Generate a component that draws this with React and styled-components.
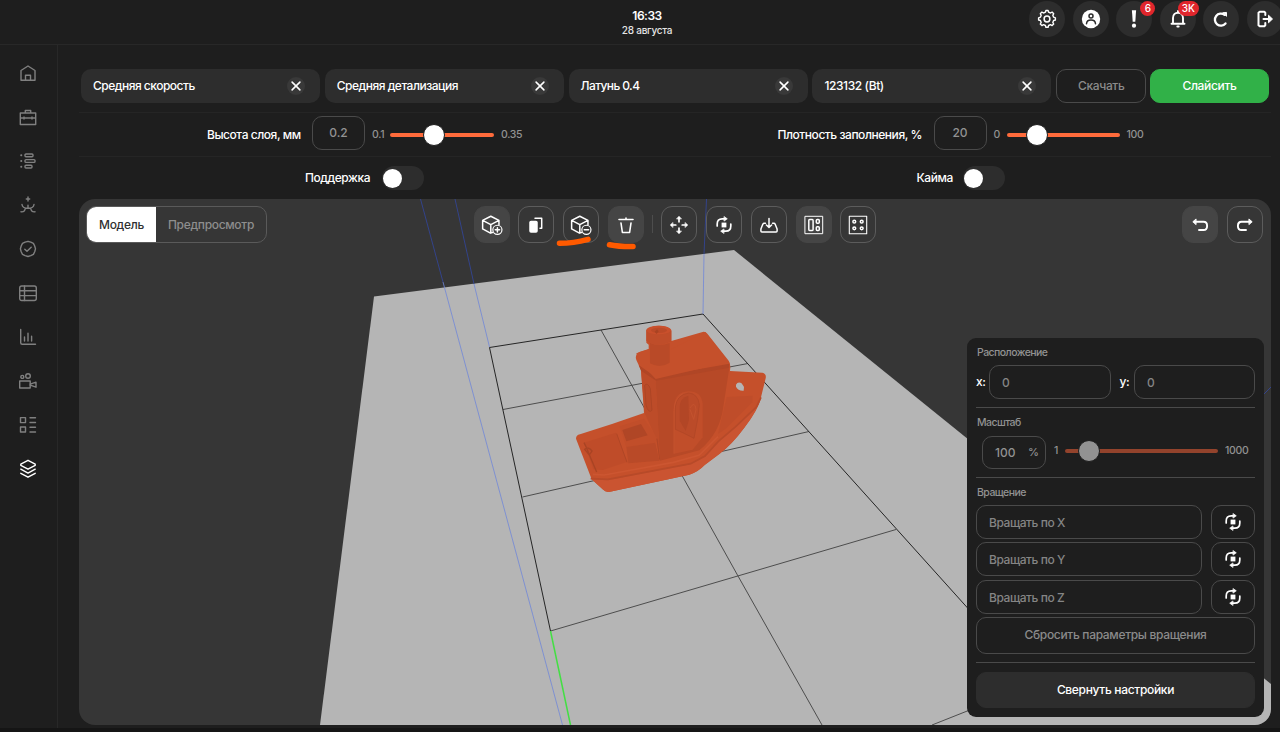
import React from "react";
import styled, { createGlobalStyle } from "styled-components";

const GlobalStyle = createGlobalStyle`
  *, *::before, *::after { box-sizing: border-box; }
  body { margin: 0; background: #1e1e1e; overflow: hidden; }
  button { font: inherit; color: inherit; letter-spacing: inherit; padding: 0; cursor: pointer; }
`;

const Page = styled.div`
  height: 732px;
  display: flex;
  flex-direction: column;
  background: #1e1e1e;
  color: #fff;
  font-family: Inter, "Liberation Sans", sans-serif;
  font-size: 12px;
  font-weight: 500;
  line-height: 16px;
  letter-spacing: -0.45px;
  overflow: hidden;
`;

const Header = styled.header`
  height: 45px;
  flex: none;
  display: grid;
  grid-template-columns: 1fr 200px 1fr;
  border-bottom: 1px solid #282828;
`;

const Clock = styled.div`
  grid-column: 2;
  padding: 8px 0 0 14px;
  text-align: center;
`;

const Time = styled.div`
  font-size: 12px;
  font-weight: 600;
  line-height: 15px;
  letter-spacing: -0.5px;
`;

const DateText = styled.div`
  font-size: 10px;
  line-height: 14px;
  color: #e4e4e4;
  letter-spacing: -0.25px;
`;

const HeaderActions = styled.div`
  display: flex;
  justify-content: flex-end;
  gap: 7.6px;
  margin: 1px -3px 0 0;
`;

const RoundButton = styled.button`
  position: relative;
  width: 36px;
  height: 36px;
  flex: none;
  display: grid;
  place-items: center;
  border: 0;
  border-radius: 50%;
  background: #2d2d2d;
`;

const Badge = styled.span`
  position: absolute;
  top: 0;
  left: ${(p) => p.$left}px;
  height: 15px;
  min-width: 15px;
  padding: 0 4px;
  border-radius: 8px;
  background: #e0262c;
  font-size: 10px;
  line-height: 15px;
  text-align: center;
  letter-spacing: -0.2px;
`;

const Body = styled.div`
  flex: 1;
  display: flex;
  min-height: 0;
`;

const Sidebar = styled.nav`
  width: 58px;
  flex: none;
  padding: 6px 2px 0 0;
  border-right: 1px solid #282828;
  display: flex;
  flex-direction: column;
`;

const NavItem = styled.a`
  height: 44px;
  display: grid;
  place-items: center;
  color: ${(p) => (p.$active ? "#fff" : "#808080")};
`;

const Main = styled.main`
  width: 1192px;
  margin-left: 21px;
  flex: none;
`;

const Selectors = styled.div`
  height: 68px;
  display: flex;
  gap: 4.8px;
  padding: 24px 2px 0;
  border-bottom: 1px solid #252525;
`;

const Selector = styled.div`
  width: 239px;
  height: 34px;
  display: flex;
  align-items: center;
  justify-content: space-between;
  padding: 0 15px 0 12px;
  border-radius: 10px;
  background: #2d2d2d;
  letter-spacing: ${(p) => p.$track}px;
`;

const ClearButton = styled.button`
  width: 18px;
  height: 18px;
  display: grid;
  place-items: center;
  border: 0;
  border-radius: 50%;
  background: #393939;
`;

const ActionButton = styled.button`
  width: ${(p) => (p.$primary ? 119 : 90)}px;
  height: 34px;
  border-radius: 10px;
  border: 1px solid ${(p) => (p.$primary ? "#31b148" : "#4a4a4a")};
  background: ${(p) => (p.$primary ? "#31b148" : "transparent")};
  color: ${(p) => (p.$primary ? "#fff" : "#8b8b8b")};
  margin-left: ${(p) => (p.$primary ? -1 : 0)}px;
  letter-spacing: -0.35px;
`;

const Settings = styled.div`
  height: ${(p) => p.$h}px;
  display: flex;
  border-bottom: ${(p) => (p.$line ? "1px solid #252525" : "0")};
`;

const Half = styled.div`
  width: 596px;
  display: flex;
  align-items: center;
  justify-content: center;
  padding-right: 25px;
`;

const Label = styled.span`
  width: ${(p) => p.$w}px;
  margin-right: 11px;
  white-space: nowrap;
`;

const NumberBox = styled.div`
  width: ${(p) => p.$w || 53}px;
  height: ${(p) => (p.$pad ? 33 : 34)}px;
  flex: none;
  display: flex;
  align-items: center;
  justify-content: ${(p) => (p.$pad ? "space-between" : "center")};
  padding: ${(p) => (p.$pad ? "0 6px 0 12px" : "0")};
  margin: ${(p) => (p.$pad ? "0 0 -3px" : "-3px 0 0")};
  border: 1px solid #4a4a4a;
  border-radius: 10px;
  color: #929292;
  letter-spacing: 0;
`;

const Unit = styled.span`
  font-size: 11px;
  margin-top: -2px;
`;

const Bound = styled.span`
  width: ${(p) => p.$w}px;
  margin-left: ${(p) => p.$ml || 0}px;
  flex: none;
  font-size: 10.5px;
  color: #929292;
  white-space: nowrap;
  letter-spacing: -0.3px;
`;

const Track = styled.div`
  width: ${(p) => p.$w}px;
  height: 4px;
  flex: none;
  margin: 0 7px;
  border-radius: 2px;
  background: ${(p) => (p.$muted ? "#93432c" : "#ff6b3b")};
  display: flex;
  align-items: center;
`;

const Thumb = styled.i`
  width: 22px;
  height: 22px;
  flex: none;
  border: 1px solid #1e1e1e;
  border-radius: 50%;
  background: ${(p) => (p.$muted ? "#929292" : "#fff")};
`;

const Toggle = styled.div`
  width: 42px;
  height: 24px;
  padding: 3px 1px;
  border-radius: 12px;
  background: #2d2d2d;
  &::before {
    content: "";
    display: block;
    width: 19px;
    height: 19px;
    border-radius: 50%;
    background: #fff;
  }
`;

const Viewport = styled.section`
  position: relative;
  height: 526px;
  border-radius: 16px;
  background: #363636;
  overflow: hidden;
`;

const Scene = styled.svg`
  display: block;
  width: 1192px;
  height: 526px;
`;

const TopTools = styled.div`
  position: absolute;
  inset: 7px 8px auto 7px;
  display: flex;
`;

const Tabs = styled.div`
  width: 181px;
  height: 37px;
  display: flex;
  border: 1px solid #5a5a5a;
  border-radius: 10px;
  overflow: hidden;
`;

const Tab = styled.button`
  width: ${(p) => (p.$active ? 69 : 110)}px;
  border: 0;
  background: ${(p) => (p.$active ? "#fff" : "transparent")};
  color: ${(p) => (p.$active ? "#303030" : "#8e8e8e")};
  letter-spacing: -0.32px;
`;

const ToolGroup = styled.div`
  display: flex;
  gap: 8.75px;
  margin-left: ${(p) => p.$ml};
`;

const ToolButton = styled.button`
  width: 36px;
  height: 37px;
  display: grid;
  place-items: center;
  border: 1px solid ${(p) => (p.$filled ? "#454545" : "#5c5c5c")};
  border-radius: 11px;
  background: ${(p) => (p.$filled ? "#454545" : "transparent")};
`;

const ToolDivider = styled.i`
  width: 1px;
  height: 18px;
  margin: 9px 0 0 -1px;
  background: #4d4d4d;
`;

const Marks = styled.svg`
  position: absolute;
  left: 474px;
  top: 36px;
  pointer-events: none;
`;

const Panel = styled.aside`
  position: absolute;
  right: 7px;
  bottom: 8px;
  width: 297px;
  height: 379px;
  padding: 6px 9px 9px;
  border-radius: 9px;
  background: #1e1e1e;
`;

const PanelSection = styled.div`
  height: ${(p) => p.$h}px;
  padding-top: ${(p) => p.$pt || 0}px;
  border-bottom: 1px solid #4a4a4a;
`;

const Caption = styled.div`
  height: 17px;
  padding-left: 1px;
  font-size: 10.5px;
  line-height: 17px;
  color: #929292;
  letter-spacing: -0.55px;
`;

const PanelRow = styled.div`
  display: flex;
  align-items: center;
  justify-content: ${(p) => (p.$spread ? "space-between" : "flex-start")};
  margin-top: ${(p) => p.$mt || 0}px;
  padding-left: ${(p) => p.$pl || 0}px;
`;

const Axis = styled.span`
  width: ${(p) => p.$w}px;
  margin-left: ${(p) => p.$ml || 0}px;
`;

const Field = styled.div`
  width: ${(p) => p.$w}px;
  height: 34px;
  line-height: 33px;
  padding-left: 12px;
  border: 1px solid #4a4a4a;
  border-radius: 10px;
  color: #858585;
`;

const RotateButton = styled.button`
  width: 44px;
  height: 34px;
  display: grid;
  place-items: center;
  border: 1px solid #4a4a4a;
  border-radius: 10px;
  background: transparent;
`;

const WideButton = styled.button`
  width: 279px;
  height: ${(p) => (p.$filled ? 36 : 37)}px;
  display: block;
  margin-top: ${(p) => (p.$filled ? 9 : 3)}px;
  border: 1px solid ${(p) => (p.$filled ? "#2d2d2d" : "#4a4a4a")};
  border-radius: 10px;
  background: ${(p) => (p.$filled ? "#2d2d2d" : "transparent")};
  color: ${(p) => (p.$filled ? "#fff" : "#8b8b8b")};
  letter-spacing: -0.32px;
`;

const BottomEdge = styled.div`
  height: 4px;
  flex: none;
  background: #151515;
`;

const Svg = ({ size = 20, sw = 1.5, children }) => (
  <svg width={size} height={size} viewBox="0 0 20 20" fill="none" stroke="currentColor"
    strokeWidth={sw} strokeLinecap="round" strokeLinejoin="round">{children}</svg>
);

const navIcons = [
  <path d="M3 17.2V7.500L10 3l7 4.500v9.700H3Zm4.500 0v-5h5v5" />,
  <><path d="M2.300 6h15.400v11.500H2.300ZM7.300 6V3.500h5.400V6M2.300 11h15.400" /><path d="M6 10v2M14 10v2" /></>,
  <><path d="M3.200 4.300h.1M3.200 10h.1M3.200 15.700h.1" strokeWidth="2" /><rect x="7" y="3" width="8" height="2.800" rx="1" /><rect x="7" y="8.600" width="10" height="2.800" rx="1" /><rect x="7" y="14.200" width="7" height="2.800" rx="1" /></>,
  <path d="M10 2v4M8.300 4h3.400M4 9.500c.3 2.500 2 3.800 6 3.800s5.700-1.300 6-3.800M3 16.800c3 .3 4.200-1 4.200-3.700M17 16.800c-3 .3-4.200-1-4.200-3.700M10 10.300v3" />,
  <><path d="m10 2.300 2.800.8 2.600 1.300 1.300 2.600.8 2.900-.8 2.900-1.300 2.600-2.600 1.300-2.800.8-2.900-.8-2.600-1.300-1.300-2.600-.8-2.900.8-2.900 1.300-2.600 2.600-1.300Z" /><path d="m6.800 10.200 2.200 2 4.200-4" /></>,
  <><rect x="1.700" y="3" width="16.600" height="14.500" rx="2" /><path d="M6.500 3v14.500M1.700 7.800h16.600M1.700 12.600h16.600" /></>,
  <path d="M2.700 2.500v13.200c0 1 .5 1.500 1.500 1.500h13.300M6.500 10v4M10 6.200V14M13.600 9.200V14" />,
  <><rect x="1.700" y="10" width="10.500" height="7" /><path d="m12.200 13.200 5.800-2v5l-5.800-2" /><circle cx="4.300" cy="5.900" r="1.500" /><circle cx="10" cy="5" r="2.300" /></>,
  <path d="M2.500 2.600h5v5h-5ZM2.500 12h5v5h-5ZM12 2.800h5.500M12 7.500h5.500M12 12.300h5.500M12 17h5.500" />,
  <path d="m10 1.300 7.200 3.800v1.300L10 10.200 2.800 6.400V5.100ZM2.800 10.200 10 14.100l7.200-3.900M2.800 14.300 10 18.200l7.200-3.900" />,
];

const Close = () => <Svg size={12} sw={2.600}><path d="m3.500 3.500 13 13M16.500 3.500l-13 13" /></Svg>;

const Cube = ({ minus }) => (
  <Svg size={24} sw={1.250}>
    <path d="M10.300 16.200 8.700 16.800 2.200 13.300V6.200L9 2.700l6.800 3.500v3.600M2.200 6.200 9 9.700l6.800-3.500M9 9.700v6.800" />
    <circle cx="14.500" cy="14" r="3.800" strokeWidth="1" />
    <path d={minus ? "M12.700 14h3.600" : "M12.700 14h3.600M14.500 12.200v3.600"} />
  </Svg>
);

const Rotate = () => (
  <Svg size={20} sw={1.700}>
    <rect x="7.600" y="7.600" width="4.800" height="4.800" fill="currentColor" stroke="none" />
    <path d="M3.200 11V9c0-3.600 1.600-5.200 5-5.200h2.500M16.800 9v2c0 3.600-1.600 5.200-5 5.200H9.300" />
    <path d="m10.300 1.700 3 2.100-3 2.100ZM9.700 14.100l-3 2.100 3 2.100Z" fill="currentColor" strokeWidth=".7" />
  </Svg>
);

const tools = [
  { filled: true, icon: <Cube /> },
  { icon: <Svg><rect x="4" y="6.500" width="7" height="10.500" rx="1" fill="currentColor" /><path d="M9 3.300h6.700v9.900h-1.700" /></Svg> },
  { icon: <Cube minus /> },
  { filled: true, icon: <Svg sw={1.600}><path d="M3 4.500h14M10 3v1M5 8l1.400 9.500h7.200L15 8" /></Svg> },
  { divider: true },
  { icon: <Svg sw={1.700}><path d="M10 6.800V3M10 13.200V17M6.800 10H3M13.200 10H17" /><path d="m7.700 3.700 2.300-2.500 2.300 2.500ZM7.700 16.300l2.300 2.500 2.300-2.500ZM3.700 7.700 1.200 10l2.500 2.300ZM16.300 7.700l2.500 2.300-2.500 2.300Z" fill="currentColor" strokeWidth=".6" /></Svg> },
  { icon: <Rotate /> },
  { icon: <Svg sw={1.500}><path d="M6.500 8.300H5.200q-1 0-1.400 1L1.900 14v2q0 1 1 1h14.200q1 0 1-1v-2l-1.900-4.700q-.4-1-1.400-1h-1.300M10 3.500v8.700M7.400 10l2.600 2.400 2.600-2.400" /></Svg> },
  { filled: true, icon: <Svg sw={1.500}><rect x="1.300" y="1.300" width="17.400" height="17.400" strokeWidth="1" /><rect x="4.800" y="4.600" width="4.300" height="10.800" rx=".8" /><rect x="12.300" y="4.600" width="3" height="3.600" rx="1" /><rect x="12.300" y="11.800" width="3" height="3.600" rx="1" /></Svg> },
  { icon: <Svg sw={1.500}><rect x="1.300" y="1.300" width="17.400" height="17.400" strokeWidth="1.100" /><circle cx="6.300" cy="6.700" r="1.400" /><circle cx="13.700" cy="6.700" r="1.400" /><circle cx="6.300" cy="13.300" r="1.400" /><circle cx="13.700" cy="13.300" r="1.400" /></Svg> },
];

const headerItems = [
  { icon: <Svg><circle cx="10" cy="10" r="2.900" /><path d="m8.400 3.200.5-1.700h2.200l.5 1.700 1.900.8 1.600-.9 1.600 1.600-.9 1.600.8 1.900 1.800.6v2.200l-1.800.5-.8 1.900.9 1.600-1.600 1.600-1.600-.9-1.900.8-.5 1.800H8.900l-.5-1.800-1.900-.8-1.600.9L3.300 15l.9-1.600-.8-1.900-1.800-.5V8.800l1.800-.6.8-1.900-.9-1.600 1.600-1.600 1.600.9Z" strokeWidth="1.400" /></Svg> },
  { icon: <Svg><circle cx="10" cy="10" r="9.200" fill="#fff" stroke="none" /><circle cx="10" cy="6.900" r="2" stroke="#2d2d2d" /><path d="M5.500 14.700c.3-5 8.700-5 9 0" stroke="#2d2d2d" /></Svg> },
  { icon: <Svg><path d="M7.900 1.200h4.200l-.8 11.500H8.700Z" fill="#fff" stroke="none" /><circle cx="10" cy="16.700" r="2.100" fill="#fff" stroke="none" /></Svg>, badge: "6", left: 24 },
  { icon: <Svg sw={1.900}><path d="M3.500 14.800h13M5 14.500V9c0-7 10-7 10 0v5.500M10 2v1.500M9.300 17.500h1.400" /></Svg>, badge: "3K", left: 18 },
  { icon: <Svg sw={2.300}><path d="M14.500 14.500A6 6 0 1 1 13.500 5.800" /><path d="m12.200 3.700 3.300-.3v3.500Z" fill="currentColor" strokeWidth="1" /></Svg> },
  { icon: <Svg sw={2}><path d="M10.300 6V3.700L9.300 2.800H4.700l-1.200 1v12.400l1.200 1h4.600l1-1V14M8.500 10h7" /><path d="m13.800 6.500 3.700 3.500-3.700 3.500Z" fill="currentColor" strokeWidth="1" /></Svg> },
];

function Slider({ w, at, muted }) {
  return (
    <Track $w={w} $muted={muted}>
      <Thumb $muted={muted} style={{ marginLeft: at - 11 }} />
    </Track>
  );
}

function Boat() {
  return (
    <g transform="translate(560 310) scale(.33333)">
      <path fill="#c5502b" d="M48 386Q48 375 60 373L156 342L252 309L243 180L229 150Q223 133 240 125L266 117V104L259 98V61Q272 47 297 47Q322 47 334 60V93L428 66Q436 64 442 71L506 152Q513 160 510 183L607 188Q620 191 617 205L603 262Q594 300 554 352Q515 405 478 432L434 465Q415 485 388 494L150 545Q138 548 128 538L95 508L75 456Z" />
      <path fill="#ca5431" d="M95 508L144 511L392 463L435 440L475 396L527 352L589 293L604 262Q594 300 554 352Q515 405 478 432L434 465Q415 485 388 494L150 545Q138 548 128 538Z" />
      <path fill="#b74927" d="M287 211L495 168L508 173L490 290Q480 370 418 421L300 452Z" />
      <path fill="#bd4c29" d="M243 180L287 211L300 452L287 382L254 309Z" />
      <path fill="#b04626" d="M236 165L286 200L508 161V173L288 212L243 182Z" />
      <path fill="#c5502b" d="M229 130L266 118H334L436 66L506 156L287 207L236 152Z" />
      <path fill="#b94a28" d="M270 98Q297 112 329 99V158Q300 177 270 160Z" />
      <path fill="#bf4d2a" d="M259 61V92Q290 116 334 94V62Z" />
      <ellipse fill="#c9502c" cx="296" cy="60" rx="37" ry="13" />
      <ellipse fill="#bb4a28" cx="297" cy="61" rx="24" ry="8" />
      <path fill="#a94323" d="m284 65 7-7 5 6-6 8Z" />
      <path fill="#bf4c29" d="M72 398L168 368L202 455L128 480L100 478Z" />
      <path fill="#c14e2a" d="M179 349L252 326L290 382L286 398L199 411Z" />
      <path fill="#b04626" d="m187 360 56-18 20 34-64 18Z" />
      <path fill="#b94a28" d="M199 411L286 398L298 452L205 460Z" />
      <path fill="none" stroke="#b04626" strokeWidth="3" d="M170 371l31 86M291 386l8 63" />
      <path fill="none" stroke="#b74a29" strokeWidth="5" d="M92 506L144 508L392 461L435 438L475 394L527 350L589 291L603 262" />
      <path fill="none" stroke="#cc5631" strokeWidth="5" d="M99 493L133 495L340 457L417 436L474 380" />
      <path fill="#bf4d2a" d="M474 372L500 261L578 257L577 277L497 356Z" />
      <path fill="#c14e2a" d="M342 431V291q2-45 43-47 39 0 43 37v101l-30 37Z" />
      <path fill="#bb4b29" stroke="#ad4525" strokeWidth="2" d="M346 358v-67q3-36 40-42 28 2 32 35l-5 43-11 58-32-16Z" />
      <path fill="#b24626" d="M359 332v-42q1-26 26-33l2 73-10 33Z" />
      <path fill="none" stroke="#c4522e" strokeWidth="3" d="M368 251q-25 13-26 51v129M390 294q15-24 18 5l-7 29-11-30" />
      <path fill="#b94a28" stroke="#ad4525" strokeWidth="3" d="M254 226q9-10 17 10l5 65q-11 11-18-17Z" />
      <path fill="none" stroke="#a94424" strokeWidth="4" d="M72 398L80 414L88 434L110 486M74 418q12-9 22 5l-8 12Z" />
      <path fill="#b5b5b5" d="M528 224q5-10 16-5l8 11-1 12q-17 1-23-12Z" />
    </g>
  );
}

function PlateScene() {
  return (
    <Scene viewBox="79 199 1192 526">
      <path fill="#b5b5b5" d="m374 296.500 360-46.500 537 434v41H320Z" />
      <g fill="none" stroke="#4d4d4d" strokeWidth="1">
        <path d="m503 409.500 245-46M522.500 497 809 431.500M550.500 631 896 529.500M932 725l68-27M601 330l137 246 84 149" />
        <path stroke="#252525" d="M550.500 631 489.500 347.500 703 314l297 330" />
      </g>
      <g fill="none" stroke="#7187d8" strokeWidth="1">
        <path opacity=".8" d="m443 282 119.500 443M474 284l15.500 63M704 254l-1 60" />
        <path stroke="#33438a" d="m420.500 199 22.500 83M455 199l19 85M706.500 199 704 254M1263 395l8-8" />
      </g>
      <path d="m550.500 631 20 94" stroke="#43df43" strokeWidth="1.500" />
      <Boat />
    </Scene>
  );
}

const selectors = [["Средняя скорость", -0.5], ["Средняя детализация", -0.5], ["Латунь 0.4", -0.6], ["123132 (Bt)", -0.4]];

export default function App() {
  return (
    <Page>
      <GlobalStyle />
      <Header>
        <Clock><Time>16:33</Time><DateText>28 августа</DateText></Clock>
        <HeaderActions>
          {headerItems.map((h, i) => (
            <RoundButton key={i}>{h.icon}{h.badge && <Badge $left={h.left}>{h.badge}</Badge>}</RoundButton>
          ))}
        </HeaderActions>
      </Header>
      <Body>
        <Sidebar>
          {navIcons.map((icon, i) => (
            <NavItem key={i} $active={i === 9}><Svg size={20} sw={1.400}>{icon}</Svg></NavItem>
          ))}
        </Sidebar>
        <Main>
          <Selectors>
            {selectors.map(([text, track]) => (
              <Selector key={text} $track={track}>{text}<ClearButton><Close /></ClearButton></Selector>
            ))}
            <ActionButton>Скачать</ActionButton>
            <ActionButton $primary>Слайсить</ActionButton>
          </Selectors>
          <Settings $h={44} $line>
            <Half>
              <Label $w={94}>Высота слоя, мм</Label>
              <NumberBox>0.2</NumberBox>
              <Bound $w={11} $ml={7}>0.1</Bound>
              <Slider w={104} at={44} />
              <Bound $w={21}>0.35</Bound>
            </Half>
            <Half>
              <Label $w={145}>Плотность заполнения, %</Label>
              <NumberBox>20</NumberBox>
              <Bound $w={6} $ml={7}>0</Bound>
              <Slider w={113} at={30} />
              <Bound $w={17}>100</Bound>
            </Half>
          </Settings>
          <Settings $h={42}>
            <Half><Label $w={66}>Поддержка</Label><Toggle /></Half>
            <Half><Label $w={35}>Кайма</Label><Toggle /></Half>
          </Settings>
          <Viewport>
            <PlateScene />
            <TopTools>
              <Tabs><Tab $active>Модель</Tab><Tab>Предпросмотр</Tab></Tabs>
              <ToolGroup $ml="206.500px">
                {tools.map((t, i) => t.divider
                  ? <ToolDivider key={i} />
                  : <ToolButton key={i} $filled={t.filled}>{t.icon}</ToolButton>)}
              </ToolGroup>
              <ToolGroup $ml="auto">
                <ToolButton $filled><Svg sw={1.900}><path d="M5 6.800h8.500c4.800 0 4.800 8.200 0 8.200H9" /><path d="M5.800 4.200 2.800 6.800l3 2.600Z" fill="currentColor" strokeWidth=".9" /></Svg></ToolButton>
                <ToolButton><Svg sw={1.900}><path d="M15 6.800H6.500c-4.800 0-4.800 8.200 0 8.200H11" /><path d="m14.200 4.200 3 2.600-3 2.600Z" fill="currentColor" strokeWidth=".9" /></Svg></ToolButton>
              </ToolGroup>
            </TopTools>
            <Marks width="90" height="20" viewBox="553 235 90 20" fill="none" stroke="#ff5a00" strokeWidth="5.500" strokeLinecap="round">
              <path d="M559.500 243.300q14 0 28.500-4M609.500 244.800q10 2 23.500 1.800" />
            </Marks>
            <Panel>
              <PanelSection $h={64}>
                <Caption>Расположение</Caption>
                <PanelRow $mt={4}>
                  <Axis $w={13}>x:</Axis><Field $w={122}>0</Field>
                  <Axis $w={14.500} $ml={8.500}>y:</Axis><Field $w={121}>0</Field>
                </PanelRow>
              </PanelSection>
              <PanelSection $h={70} $pt={6}>
                <Caption>Масштаб</Caption>
                <PanelRow $mt={5} $pl={6}>
                  <NumberBox $w={64} $pad><span>100</span><Unit>%</Unit></NumberBox>
                  <Bound $w={4} $ml={8}>1</Bound>
                  <Slider w={153} at={24} muted />
                  <Bound $w={24}>1000</Bound>
                </PanelRow>
              </PanelSection>
              <PanelSection $h={185} $pt={6}>
                <Caption>Вращение</Caption>
                {["X", "Y", "Z"].map((a, i) => (
                  <PanelRow key={a} $spread $mt={i ? 3.400 : 4}>
                    <Field $w={226}>Вращать по {a}</Field>
                    <RotateButton><Rotate /></RotateButton>
                  </PanelRow>
                ))}
                <WideButton>Сбросить параметры вращения</WideButton>
              </PanelSection>
              <WideButton $filled>Свернуть настройки</WideButton>
            </Panel>
          </Viewport>
        </Main>
      </Body>
      <BottomEdge />
    </Page>
  );
}
